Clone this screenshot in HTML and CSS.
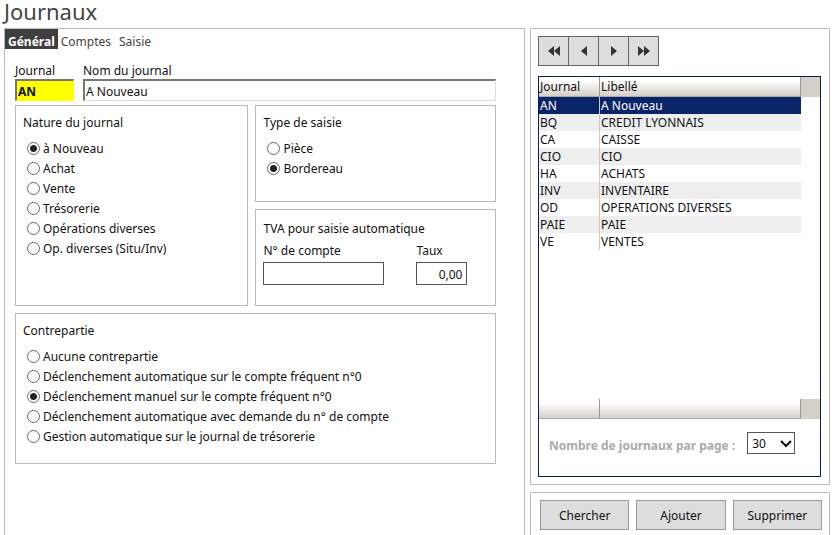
FILE: index.html
```html
<!DOCTYPE html>
<html lang="fr">

<head>
  <meta charset="UTF-8">
  <meta name="viewport" content="width=device-width, initial-scale=1.0">
  <title>Journaux</title>
  <link rel="stylesheet" href="styles.css">
</head>

<body>
  <h1 class="title">Journaux</h1>
  <div class="layout">
    <form class="panel main">
      <div class="tabs">
        <button type="button" class="tab active">Général</button>
        <button type="button" class="tab">Comptes</button>
        <button type="button" class="tab">Saisie</button>
      </div>
      <div class="content">
        <div class="fields">
          <div class="field code-field">
            <label for="code">Journal</label>
            <input class="sunken code" type="text" id="code" value="AN">
          </div>
          <div class="field name-field">
            <label for="nom">Nom du journal</label>
            <input class="sunken" type="text" id="nom" value="A Nouveau">
          </div>
        </div>

        <div class="groups">
          <fieldset class="group nature">
            <legend>Nature du journal</legend>
            <label class="option"><input type="radio" name="nature" checked>à Nouveau</label>
            <label class="option"><input type="radio" name="nature">Achat</label>
            <label class="option"><input type="radio" name="nature">Vente</label>
            <label class="option"><input type="radio" name="nature">Trésorerie</label>
            <label class="option"><input type="radio" name="nature">Opérations diverses</label>
            <label class="option"><input type="radio" name="nature">Op. diverses (Situ/Inv)</label>
          </fieldset>
          <fieldset class="group type">
            <legend>Type de saisie</legend>
            <label class="option"><input type="radio" name="type">Pièce</label>
            <label class="option"><input type="radio" name="type" checked>Bordereau</label>
          </fieldset>
          <fieldset class="group tva">
            <legend>TVA pour saisie automatique</legend>
            <div class="tva-fields">
              <div class="field">
                <label for="compte">N° de compte</label>
                <input class="box compte" type="text" id="compte">
              </div>
              <div class="field">
                <label for="taux">Taux</label>
                <input class="box taux" type="text" id="taux" value="0,00">
              </div>
            </div>
          </fieldset>
          <fieldset class="group contrepartie">
            <legend>Contrepartie</legend>
            <label class="option"><input type="radio" name="contrepartie">Aucune contrepartie</label>
            <label class="option"><input type="radio" name="contrepartie">Déclenchement automatique sur le compte fréquent n°0</label>
            <label class="option"><input type="radio" name="contrepartie" checked>Déclenchement manuel sur le compte fréquent n°0</label>
            <label class="option"><input type="radio" name="contrepartie">Déclenchement automatique avec demande du n° de compte</label>
            <label class="option"><input type="radio" name="contrepartie">Gestion automatique sur le journal de trésorerie</label>
          </fieldset>
        </div>
      </div>
    </form>

    <div class="side">
      <div class="panel list-panel">
        <div class="pager">
          <button class="nav-button" aria-label="Premier">
            <svg width="14" height="12" viewBox="0 0 14 12"><path d="M7 1v10L1 6zM13 1v10L7 6z" /></svg>
          </button>
          <button class="nav-button" aria-label="Précédent">
            <svg width="14" height="12" viewBox="0 0 14 12"><path d="M10 1v10L4 6z" /></svg>
          </button>
          <button class="nav-button" aria-label="Suivant">
            <svg width="14" height="12" viewBox="0 0 14 12"><path d="M4 1v10l6-5z" /></svg>
          </button>
          <button class="nav-button" aria-label="Dernier">
            <svg width="14" height="12" viewBox="0 0 14 12"><path d="M1 1v10l6-5zM7 1v10l6-5z" /></svg>
          </button>
        </div>

        <div class="list">
          <table class="journals">
            <thead>
              <tr><th class="col-code">Journal</th><th>Libellé</th><th class="col-scroll"></th></tr>
            </thead>
            <tbody>
              <tr class="selected"><td>AN</td><td>A Nouveau</td><td></td></tr>
              <tr><td>BQ</td><td>CREDIT LYONNAIS</td><td></td></tr>
              <tr><td>CA</td><td>CAISSE</td><td></td></tr>
              <tr><td>CIO</td><td>CIO</td><td></td></tr>
              <tr><td>HA</td><td>ACHATS</td><td></td></tr>
              <tr><td>INV</td><td>INVENTAIRE</td><td></td></tr>
              <tr><td>OD</td><td>OPERATIONS DIVERSES</td><td></td></tr>
              <tr><td>PAIE</td><td>PAIE</td><td></td></tr>
              <tr><td>VE</td><td>VENTES</td><td></td></tr>
            </tbody>
            <tbody class="filler">
              <tr><td colspan="3"></td></tr>
            </tbody>
            <tfoot>
              <tr><td></td><td></td><td class="col-scroll"></td></tr>
            </tfoot>
          </table>
          <div class="per-page">
            <label for="nombre">Nombre de journaux par page :</label>
            <div class="select-box">
              <select id="nombre">
                <option>10</option>
                <option>20</option>
                <option selected>30</option>
              </select>
              <svg class="arrow" width="12" height="8" viewBox="0 0 12 8"><path d="M1 1l5 5 5-5" /></svg>
            </div>
          </div>
        </div>
      </div>

      <div class="panel actions">
        <button class="button">Chercher</button>
        <button class="button">Ajouter</button>
        <button class="button">Supprimer</button>
      </div>
    </div>
  </div>
</body>

</html>
```
FILE: styles.css
```css
* {
  box-sizing: border-box;
}

body {
  display: flex;
  flex-direction: column;
  min-height: 100vh;
  margin: 0;
  padding: 0 4px 0 4px;
  font-family: "Noto Sans", "Open Sans", sans-serif;
  font-size: 12px;
  color: #111;
  background-color: white;
}

button,
input,
select {
  font: inherit;
  color: inherit;
  margin: 0;
  border-radius: 0;
}

.title {
  margin: 0;
  height: 28px;
  line-height: 22px;
  font-size: 22px;
  font-weight: normal;
  color: #444;
}

.layout {
  flex: 1;
  display: grid;
  grid-template-columns: minmax(0, 1fr) 300px;
  gap: 5px;
}

.panel {
  border: 1px solid #bbb;
}

.main {
  border-bottom: 0;
}

/* tabs */
.tabs {
  display: flex;
}

.tab {
  height: 20px;
  padding: 5px 3px 0;
  line-height: 15px;
  border: none;
  background: transparent;
  color: #444;
}

.tab.active {
  background-color: #3f3f3f;
  color: white;
  font-weight: bold;
}

.tab:last-child {
  margin-left: 2px;
}

.content {
  padding: 14px 28px 0 10px;
}

.field {
  display: flex;
  flex-direction: column;
}

.field label {
  line-height: 16px;
}

.fields {
  display: flex;
  gap: 9px;
}

.code-field {
  width: 59px;
}

.name-field {
  flex: 1;
}

.sunken {
  width: 100%;
  height: 22px;
  padding: 2px 1px 0;
  border: 1px solid #ddd;
  border-top: 2px solid #777;
  border-left: 2px solid #777;
}

.code {
  background-color: #ff0;
  border-right-color: #ff0;
  border-bottom-color: #ff0;
  font-weight: bold;
}

/* groups */
.groups {
  display: grid;
  grid-template-columns: 233fr 240fr;
  grid-template-rows: 97px 97px 151px;
  gap: 7px;
  margin-top: 4px;
}

.group {
  min-width: 0;
  margin: 0;
  padding: 8px 7px;
  border: 1px solid #bbb;
}

.group legend {
  float: left;
  width: 100%;
  padding: 0;
  margin-bottom: 6px;
  line-height: 18px;
}

.nature {
  grid-row: span 2;
}

.group.tva {
  padding-top: 10px;
}

.tva legend {
  margin-bottom: 5px;
}

.contrepartie {
  grid-column: span 2;
}

.option {
  display: flex;
  clear: both;
  align-items: center;
  gap: 3px;
  height: 20px;
  padding-left: 4px;
}

.option input {
  appearance: none;
  width: 13px;
  height: 13px;
  border: 1px solid #666;
  border-radius: 50%;
  background-color: white;
}

.option input:checked {
  background-image: radial-gradient(circle, #222 3px, transparent 4px);
}

.tva-fields {
  display: flex;
  clear: both;
  gap: 32px;
}

.box {
  height: 23px;
  margin-top: 3px;
  padding: 2px 4px 0;
  border: 1px solid #555;
}

.compte {
  width: 121px;
}

.taux {
  width: 51px;
  text-align: right;
}

/* right column */
.side {
  display: flex;
  flex-direction: column;
  gap: 7px;
}

.list-panel {
  padding: 7px 8px 7px 7px;
}

.pager {
  display: flex;
  margin-bottom: 10px;
}

.nav-button {
  display: flex;
  align-items: center;
  justify-content: center;
  width: 31px;
  height: 30px;
  padding: 0;
  border: 1px solid #666;
  background-color: #ddd;
}

.nav-button + .nav-button {
  margin-left: -1px;
}

.nav-button svg {
  fill: #333;
}

.list {
  border: 1px solid #0a1f50;
}

.journals {
  width: 100%;
  table-layout: fixed;
  border-collapse: separate;
  border-spacing: 0;
}

.journals th,
.journals td {
  height: 17px;
  padding: 0 1px;
  line-height: 17px;
  text-align: left;
  font-weight: normal;
  white-space: nowrap;
}

.journals .col-code {
  width: 61px;
}

.journals .col-scroll {
  width: 19px;
  background: #d4d0c8;
}

.journals th,
.journals tfoot td {
  height: 20px;
  border-right: 1px solid #999;
  border-bottom: 1px solid #aaa;
  background: linear-gradient(white 20%, #d4d0c8);
}

.journals th:last-child,
.journals tfoot td:last-child {
  border: none;
}

.journals tbody td:first-child {
  border-right: 1px solid #d4c8b8;
}

.journals tr:nth-child(even) td:not(:last-child) {
  background-color: #eee;
}

.journals .selected td:not(:last-child) {
  background-color: #0a246a;
  color: white;
}

.journals .filler td:first-child {
  height: 149px;
  border: none;
}

.per-page {
  display: flex;
  align-items: center;
  gap: 12px;
  padding: 13px 10px 22px;
}

.per-page label {
  padding-top: 4px;
  color: #aaa;
  font-weight: bold;
}

.select-box {
  position: relative;
}

.select-box select {
  appearance: none;
  width: 48px;
  height: 22px;
  padding: 0 4px;
  border: 1px solid #555;
  background-color: white;
}

.arrow {
  position: absolute;
  top: 8px;
  right: 3px;
  fill: none;
  stroke: #111;
  stroke-width: 2;
  pointer-events: none;
}

.actions {
  flex: 1;
  display: flex;
  gap: 7px;
  padding: 7px 7px 4px 9px;
  border-bottom: 0;
}

.button {
  flex: 1;
  height: 30px;
  padding: 0;
  border: 1px solid #999;
  background-color: #ddd;
}
```
